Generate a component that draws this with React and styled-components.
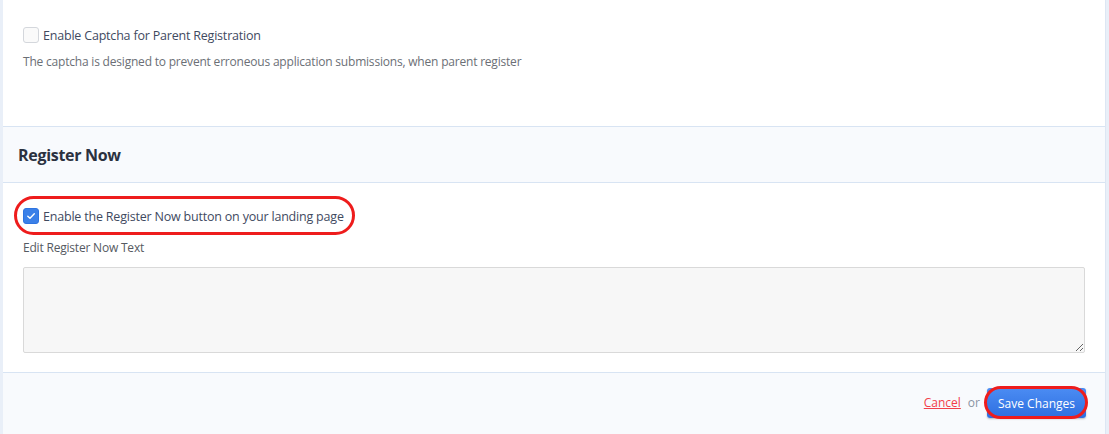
import React, { useState } from 'react';
import styled, { createGlobalStyle } from 'styled-components';

const GlobalStyle = createGlobalStyle`
  html, body {
    margin: 0;
    padding: 0;
    background: #e9eff8;
    font-family: "Open Sans", "Noto Sans", Arial, sans-serif;
  }
`;

const Page = styled.div`
  padding: 0 3px 0 3px;
  height: 434px;
  overflow: hidden;
  box-sizing: border-box;
`;

const Panel = styled.div`
  background: #fff;
  border-right: 1px solid #dde6f3;
  min-height: 434px;
`;

const Section = styled.div`
  padding: 27px 20px 55px;
  border-bottom: 1px solid #d8e4f3;
`;

const SectionHeader = styled.div`
  height: 55px;
  display: flex;
  align-items: center;
  padding: 0 15px;
  background: #f8fafd;
  border-bottom: 1px solid #d8e4f3;
  font-size: 16px;
  letter-spacing: -0.3px;
  font-weight: 700;
  color: #2b3140;
`;

const Body = styled.div`
  padding: 25px 20px 19px;
  border-bottom: 1px solid #d8e4f3;
`;

const CheckRow = styled.label`
  position: relative;
  display: flex;
  width: fit-content;
  align-items: center;
  gap: 4px;
  height: 16px;
  font-size: 12.5px;
  letter-spacing: -0.2px;
  color: #3f4a5f;
  cursor: pointer;
`;

const Box = styled.span`
  width: 16px;
  height: 16px;
  box-sizing: border-box;
  border-radius: 3px;
  display: inline-flex;
  align-items: center;
  justify-content: center;
  border: 1px solid ${p => (p.checked ? '#2f74e0' : '#d4d7dc')};
  background: ${p => (p.checked ? '#3b80e8' : '#fafafa')};
`;

const Hint = styled.p`
  margin: 10px 0 0;
  font-size: 12px;
  letter-spacing: -0.2px;
  line-height: 18px;
  color: #6b6f76;
`;

const FieldLabel = styled.div`
  margin-top: 15px;
  font-size: 12px;
  letter-spacing: -0.2px;
  line-height: 18px;
  color: #555a62;
`;

const TextArea = styled.textarea`
  display: block;
  margin-top: 10px;
  width: 100%;
  height: 86px;
  box-sizing: border-box;
  background: #f7f7f7;
  border: 1px solid #d9d9d9;
  border-radius: 2px;
  font-family: inherit;
  resize: vertical;
`;

const Footer = styled.div`
  display: flex;
  justify-content: flex-end;
  align-items: flex-start;
  padding: 15px 19px 0;
  height: 61px;
  box-sizing: border-box;
  background: #f8fafd;
  font-size: 12px;
`;

const CancelLink = styled.a`
  line-height: 30px;
  color: #f2404a;
  text-decoration: underline;
  cursor: pointer;
`;

const Or = styled.span`
  line-height: 30px;
  color: #8a93a3;
  margin: 0 7px;
`;

const SaveButton = styled.button`
  position: relative;
  height: 30px;
  padding: 0 11px;
  border: none;
  border-radius: 3px;
  background: linear-gradient(#4b8cf3, #2e6fe0);
  box-shadow: 0 1px 2px rgba(0, 0, 0, 0.25);
  color: #fff;
  font-family: inherit;
  font-size: 12px;
  cursor: pointer;
`;

const Highlight = styled.span`
  position: absolute;
  top: ${p => p.top}px;
  bottom: ${p => p.bottom}px;
  left: ${p => p.left}px;
  right: ${p => p.right}px;
  border: 3px solid #ee1c1c;
  border-radius: 20px;
  pointer-events: none;
`;

const Check = () => (
  <svg width="10" height="10" viewBox="0 0 10 10">
    <path d="M1.8 5.2 L4 7.3 L8.3 2.8" fill="none" stroke="#fff" strokeWidth="1.4" strokeLinecap="round" strokeLinejoin="round" />
  </svg>
);

const App = () => {
  const [captcha, setCaptcha] = useState(false);
  const [registerNow, setRegisterNow] = useState(true);
  const [text, setText] = useState('');

  return (
    <Page>
      <GlobalStyle />
      <Panel>
        <Section>
          <CheckRow onClick={() => setCaptcha(!captcha)}>
            <Box checked={captcha}>{captcha && <Check />}</Box>
            Enable Captcha for Parent Registration
          </CheckRow>
          <Hint>The captcha is designed to prevent erroneous application submissions, when parent register</Hint>
        </Section>
        <SectionHeader>Register Now</SectionHeader>
        <Body>
          <CheckRow onClick={() => setRegisterNow(!registerNow)}>
            <Box checked={registerNow}>{registerNow && <Check />}</Box>
            Enable the Register Now button on your landing page
            <Highlight top={-12} bottom={-11} left={-9} right={-11} />
          </CheckRow>
          <FieldLabel>Edit Register Now Text</FieldLabel>
          <TextArea value={text} onChange={e => setText(e.target.value)} />
        </Body>
        <Footer>
          <CancelLink>Cancel</CancelLink>
          <Or>or</Or>
          <SaveButton>
            Save Changes
            <Highlight top={-2} bottom={-1} left={-3} right={-2} />
          </SaveButton>
        </Footer>
      </Panel>
    </Page>
  );
};

export default App;
